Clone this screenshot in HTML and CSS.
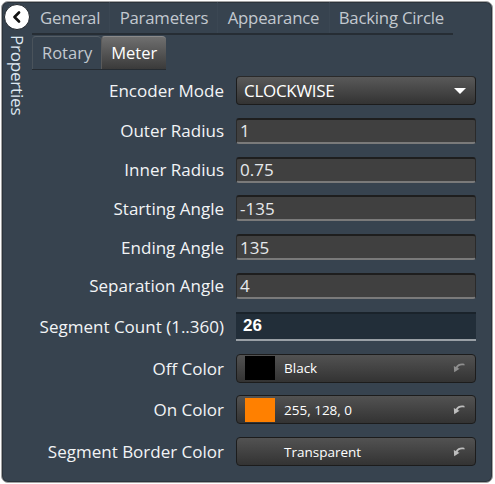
FILE: index.html
```html
<!DOCTYPE html>
<html>
<head>
<meta charset="utf-8">
<link rel="stylesheet" href="styles.css">
</head>
<body>
<div class="panel">
  <div class="side">
    <div class="back-btn">
      <svg width="12" height="12" viewBox="0 0 12 12"><path d="M8 1.5 L3.5 6 L8 10.5" fill="none" stroke="#111" stroke-width="2.6" stroke-linecap="round" stroke-linejoin="round"/></svg>
    </div>
    <div class="side-title">Properties</div>
  </div>
  <div class="main">
    <div class="tabs top-tabs">
      <div class="tab">General</div>
      <div class="tab">Parameters</div>
      <div class="tab">Appearance</div>
      <div class="tab">Backing Circle</div>
    </div>
    <div class="tabs sub-tabs">
      <div class="subtab">Rotary</div>
      <div class="subtab active">Meter</div>
    </div>
    <div class="form">
      <div class="label">Encoder Mode</div>
      <div class="dropdown h29"><span>CLOCKWISE</span><span class="caret"></span></div>

      <div class="label">Outer Radius</div>
      <div class="input h26">1</div>

      <div class="label">Inner Radius</div>
      <div class="input h26">0.75</div>

      <div class="label">Starting Angle</div>
      <div class="input h26">-135</div>

      <div class="label">Ending Angle</div>
      <div class="input h26">135</div>

      <div class="label">Separation Angle</div>
      <div class="input h26">4</div>

      <div class="label">Segment Count (1..360)</div>
      <div class="input focused h29">26</div>

      <div class="label">Off Color</div>
      <div class="colorbtn h29"><span class="swatch black"></span><span class="ctext">Black</span><svg class="pick" width="12" height="10" viewBox="0 0 12 10"><path d="M11.5 2.6 C8 1.6 5.6 2.6 4.6 4.9 L6.6 5.8 L1.2 9.2 L0.8 3 L2.8 4 C4.4 0.8 8.2 0 11.5 0.9 Z" fill="#8e8e8e"/></svg></div>

      <div class="label">On Color</div>
      <div class="colorbtn h29"><span class="swatch orange"></span><span class="ctext">255, 128, 0</span><svg class="pick" width="12" height="10" viewBox="0 0 12 10"><path d="M11.5 2.6 C8 1.6 5.6 2.6 4.6 4.9 L6.6 5.8 L1.2 9.2 L0.8 3 L2.8 4 C4.4 0.8 8.2 0 11.5 0.9 Z" fill="#bdbdbd"/></svg></div>

      <div class="label">Segment Border Color</div>
      <div class="colorbtn h29"><span class="swatch none"></span><span class="ctext">Transparent</span><svg class="pick" width="12" height="10" viewBox="0 0 12 10"><path d="M11.5 2.6 C8 1.6 5.6 2.6 4.6 4.9 L6.6 5.8 L1.2 9.2 L0.8 3 L2.8 4 C4.4 0.8 8.2 0 11.5 0.9 Z" fill="#bdbdbd"/></svg></div>
    </div>
  </div>
</div>
</body>
</html>
```
FILE: styles.css
```css
html, body {
  margin: 0;
  padding: 0;
  background: #ffffff;
}
body {
  font-family: "Open Sans", "Noto Sans", sans-serif;
}
.panel {
  margin: 1px;
  width: 492px;
  height: 482px;
  box-sizing: border-box;
  border: 1px solid #a3a3a3;
  border-radius: 7px;
  background: #37434f;
  box-shadow: inset 0 0 0 1px #2b333b;
  display: flex;
  overflow: hidden;
}
.side {
  width: 30px;
  flex: none;
  display: flex;
  flex-direction: column;
  align-items: center;
}
.back-btn {
  margin-top: 2px;
  width: 24px;
  height: 24px;
  border-radius: 50%;
  background: #ffffff;
  border: 1px solid #1f252b;
  display: flex;
  align-items: center;
  justify-content: center;
}
.side-title {
  margin-top: 5px;
  writing-mode: vertical-rl;
  color: #dde7f1;
  font-size: 17px;
  line-height: 18px;
  letter-spacing: -0.2px;
}
.main {
  flex: 1;
  display: flex;
  flex-direction: column;
  align-items: flex-start;
}
.tabs {
  display: flex;
}
.top-tabs {
  height: 31px;
  border-bottom: 2px solid #262d34;
}
.tab {
  padding: 0 9.2px;
  color: #c3c9cf;
  font-size: 16.75px;
  line-height: 31px;
  letter-spacing: -0.2px;
  border-left: 1px solid #3b4753;
}
.tab:first-child {
  border-left: none;
  padding-left: 8px;
}
.sub-tabs {
  margin-top: 1px;
  height: 33px;
  border-bottom: 1px solid #252b31;
}
.subtab {
  padding: 0 9px;
  color: #c3c9cf;
  font-size: 16.5px;
  line-height: 32px;
  border-top: 1px solid #555e66;
  border-left: 1px solid #4a535b;
  border-radius: 4px 4px 0 0;
}
.subtab.active {
  color: #ffffff;
  background: linear-gradient(#6f6f6f, #3a3a3a);
  border-top-color: #8a8a8a;
  border-left-color: #5a5a5a;
}
.form {
  margin-top: 6px;
  display: grid;
  grid-template-columns: 192px 240px;
  column-gap: 12px;
  row-gap: 12.8px;
  align-items: center;
}
.label {
  text-align: right;
  color: #f2f4f6;
  font-size: 17px;
  white-space: nowrap;
}
.h26 { height: 26px; }
.h29 { height: 29px; }
.dropdown {
  box-sizing: border-box;
  border-radius: 4px;
  background: linear-gradient(#595959, #333333);
  border: 1px solid #1c1c1c;
  border-top-color: #2a2a2a;
  display: flex;
  align-items: center;
  justify-content: space-between;
  padding: 0 9px 0 7px;
  color: #ffffff;
  font-size: 17px;
  letter-spacing: -0.3px;
}
.caret {
  width: 0;
  height: 0;
  border-left: 6px solid transparent;
  border-right: 6px solid transparent;
  border-top: 6px solid #ffffff;
}
.input {
  box-sizing: border-box;
  border-radius: 3px;
  background: #404040;
  border: 1px solid #2a2a2a;
  border-top: 2px solid #1e1e1e;
  border-bottom: 2px solid #7a7a7a;
  color: #e6e9ec;
  font-size: 17px;
  padding: 0 3px;
  display: flex;
  align-items: center;
}
.input.focused {
  background: #222e39;
  border: none;
  border-top: 2px solid #1a232b;
  border-bottom: 2px solid #9aa0a6;
  border-radius: 0;
  padding-left: 7px;
  color: #ffffff;
  font-family: "Liberation Sans", Arial, sans-serif;
  font-weight: bold;
  font-size: 17px;
}
.colorbtn {
  box-sizing: border-box;
  border-radius: 4px;
  background: linear-gradient(#525252, #333333);
  border: 1px solid #1c1c1c;
  display: flex;
  align-items: center;
  padding: 0 10px 0 8px;
  color: #ffffff;
  font-size: 13.5px;
}
.swatch {
  width: 30px;
  height: 24px;
  flex: none;
}
.swatch.black { background: #000000; }
.swatch.orange { background: #ff8000; }
.ctext {
  margin-left: 9px;
  flex: 1;
}
.pick {
  flex: none;
}
```
